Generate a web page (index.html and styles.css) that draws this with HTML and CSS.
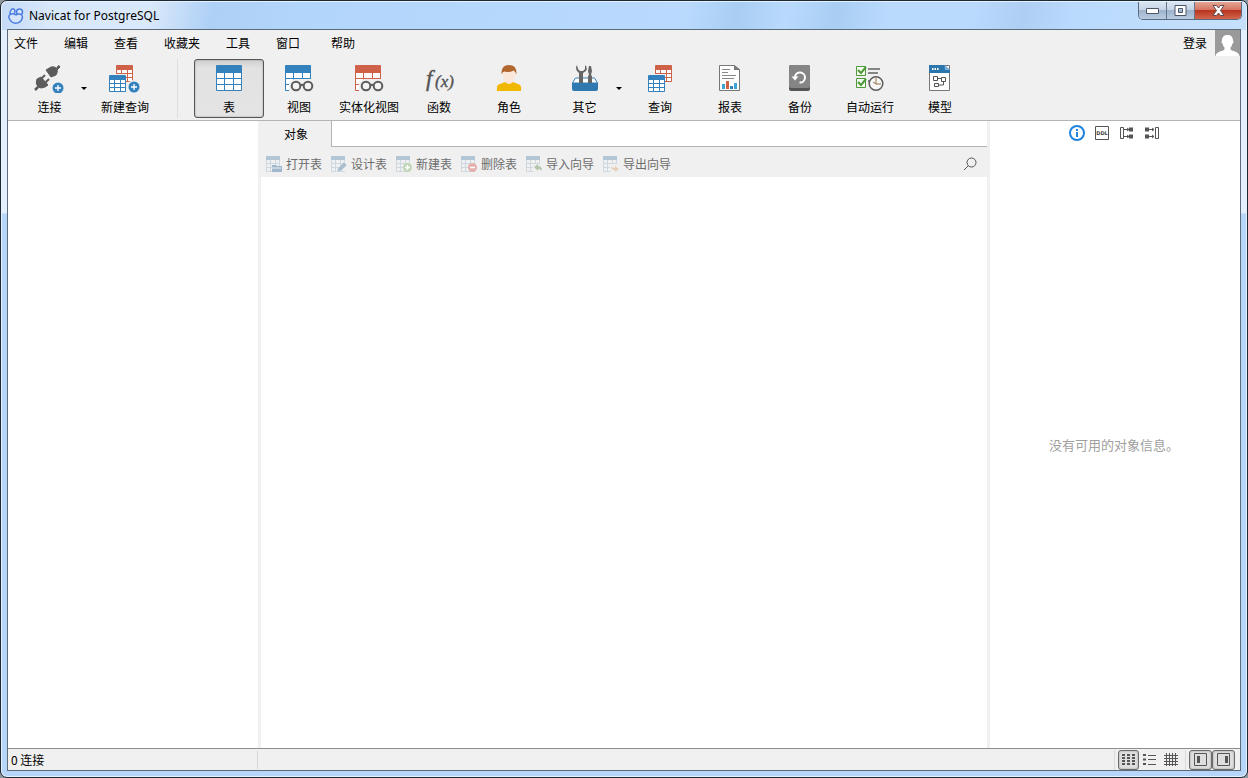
FILE: index.html
```html
<!DOCTYPE html>
<html lang="zh-CN">
<head>
    <meta charset="UTF-8">
    <meta name="viewport" content="width=device-width, initial-scale=1.0">
    <title>Navicat for PostgreSQL</title>
    <link rel="stylesheet" href="styles.css">
</head>
<body>
    <!-- shared icon parts -->
    <svg class="defs" width="0" height="0" aria-hidden="true">
        <symbol id="grid-big" viewBox="0 0 26 26">
            <path fill="currentColor" d="M0 1q0-1 1-1h24q1 0 1 1v24q0 1-1 1H1q-1 0-1-1z"/>
            <path fill="#fff" d="M1 8h7v5H1zM9 8h8v5H9zM18 8h7v5h-7zM1 14h7v5H1zM9 14h8v5H9zM18 14h7v5h-7zM1 20h7v5H1zM9 20h8v5H9zM18 20h7v5h-7z"/>
        </symbol>
        <symbol id="grid-small" viewBox="0 0 17 17">
            <path fill="currentColor" d="M0 1q0-1 1-1h15q1 0 1 1v15q0 1-1 1H1q-1 0-1-1z"/>
            <path fill="#fff" d="M1 5h4v3H1zM6 5h5v3H6zM12 5h4v3h-4zM1 9h4v3H1zM6 9h5v3H6zM12 9h4v3h-4zM1 13h4v3H1zM6 13h5v3H6zM12 13h4v3h-4z"/>
        </symbol>
        <symbol id="glasses" viewBox="0 0 30 27">
            <path fill="#efefef" d="M5 27V19q2-5 7-5h16v13z"/>
            <g fill="#f4f4f4" stroke="#5b5b5b" stroke-width="2">
                <circle cx="12" cy="21" r="4.300"/>
                <circle cx="24" cy="21" r="4.300"/>
                <path d="M16 20.500q2-1.500 4 0" fill="none"/>
            </g>
        </symbol>
        <symbol id="plus" viewBox="0 0 12 12">
            <circle cx="6" cy="6" r="5.500" fill="#3482bd"/>
            <path d="M6 3v6M3 6h6" stroke="#fff" stroke-width="1.300"/>
        </symbol>
        <symbol id="mini-table" viewBox="0 0 16 16">
            <path fill="#b3c6d6" d="M0 0h14v4H0z"/>
            <path d="M.5 4v11.500H14M.5 7.500H14M.5 11.500H14M4.500 4v11M9.500 4v11M13.500 4v7" fill="none" stroke="#cdd8e1"/>
        </symbol>
    </svg>

    <div class="window">
        <header class="titlebar">
            <svg class="app-icon" width="16" height="16" viewBox="0 0 16 16" fill="#d5e4fb" stroke="#4c7ee0" stroke-width="1.500">
                <ellipse cx="4.500" cy="4" rx="2.200" ry="3.200" transform="rotate(20 4.500 4)"/>
                <ellipse cx="11.500" cy="4" rx="3" ry="3"/>
                <path d="M2 6.500Q0 8 1.500 11q2 4 6 4.200 5-.2 6.500-4.200 1.200-3-1-4.500-3-1-5 .5-3-2-6-.5z"/>
            </svg>
            <h1 class="title">Navicat for PostgreSQL</h1>
            <div class="window-controls">
                <button type="button" class="control" aria-label="最小化">
                    <svg width="13" height="6" viewBox="0 0 13 6"><path d="M.5.5h12v5H.5z" fill="#fff" stroke="#4d5569"/></svg>
                </button>
                <button type="button" class="control" aria-label="最大化">
                    <svg width="13" height="11" viewBox="0 0 13 11"><path d="M1 .5h11v10H1zM4.500 3.500v4h4v-4z" fill="#fff" fill-rule="evenodd" stroke="#4d5569"/></svg>
                </button>
                <button type="button" class="control control-close" aria-label="关闭">
                    <svg width="13" height="11" viewBox="0 0 13 11"><path d="M1 .5h3.500l2 2.500 2-2.500H12L8.500 5.500l3.500 5H8.500l-2-2.500-2 2.500H1l3.500-5z" fill="#fff" stroke="#5d4a52"/></svg>
                </button>
            </div>
        </header>

        <div class="client">
            <div class="menubar">
                <nav class="menus">
                    <button type="button" class="menu">文件</button>
                    <button type="button" class="menu">编辑</button>
                    <button type="button" class="menu">查看</button>
                    <button type="button" class="menu">收藏夹</button>
                    <button type="button" class="menu">工具</button>
                    <button type="button" class="menu">窗口</button>
                </nav>
                <nav class="menus">
                    <button type="button" class="menu">帮助</button>
                </nav>
                <button type="button" class="login">
                    <span>登录</span>
                    <svg class="avatar" width="25" height="26" viewBox="0 0 25 26">
                        <path fill="#9a9a9a" d="M0 0h25v26H0z"/>
                        <path fill="#fff" d="M12.500 5c3.500 0 5.500 2 5.500 5.500 1 1 .5 2.500-.5 3-.5 2-1 3-2 4v2c2 2 8 1.500 9 6.500H0.500c1-5 7-4.500 9-6.500v-2c-1-1-1.500-2-2-4-1-.5-1.500-2-.5-3C7 7 9 5 12.500 5z"/>
                    </svg>
                </button>
            </div>

            <div class="toolbar">
                <div class="split">
                    <button type="button" class="tool">
                        <svg width="32" height="28" viewBox="0 0 32 28">
                            <g fill="#5b5b5b" stroke="#5b5b5b">
                                <path d="M23 2l2-1.500 1 1.500-3 3z"/>
                                <path d="M12 5l5-3q4-1 6 2 1 3-1 6l-5 2z"/>
                                <path d="M3 14l4-2 7 8-3 2q-4 2-7 0-3-4-1-8z"/>
                                <path d="M7 14l4-4M11 18l4-4" fill="none" stroke-width="2"/>
                                <path d="M4 22l-3 3" fill="none" stroke-width="2.500"/>
                            </g>
                            <use href="#plus" x="18" y="17" width="12" height="12"/>
                        </svg>
                        <span>连接</span>
                    </button>
                    <button type="button" class="split-arrow" aria-label="连接选项"></button>
                </div>
                <button type="button" class="tool">
                    <svg width="32" height="28" viewBox="0 0 32 28">
                        <use href="#grid-small" class="red" x="7" y="0" width="17" height="17"/>
                        <path fill="#efefef" d="M0 9h17v19H0z"/>
                        <use href="#grid-small" class="blue" x="0" y="10" width="17" height="17"/>
                        <circle cx="25" cy="22" r="7" fill="#efefef"/>
                        <use href="#plus" x="19" y="16" width="12" height="12"/>
                    </svg>
                    <span>新建查询</span>
                </button>
                <span class="tool-separator"></span>
                <button type="button" class="tool tool-active">
                    <svg width="26" height="28" viewBox="0 0 26 28"><use href="#grid-big" class="blue" width="26" height="26"/></svg>
                    <span>表</span>
                </button>
                <button type="button" class="tool">
                    <svg width="30" height="28" viewBox="0 0 30 28">
                        <use href="#grid-big" class="blue" x="1" width="26" height="26"/>
                        <use href="#glasses" width="30" height="27"/>
                    </svg>
                    <span>视图</span>
                </button>
                <button type="button" class="tool">
                    <svg width="30" height="28" viewBox="0 0 30 28">
                        <use href="#grid-big" class="red" x="1" width="26" height="26"/>
                        <use href="#glasses" width="30" height="27"/>
                    </svg>
                    <span>实体化视图</span>
                </button>
                <button type="button" class="tool">
                    <svg width="34" height="28" viewBox="0 0 34 28" class="fx">
                        <text x="4" y="21" font-size="23">f</text>
                        <text x="13" y="22" font-size="17">(x)</text>
                    </svg>
                    <span>函数</span>
                </button>
                <button type="button" class="tool">
                    <svg width="26" height="28" viewBox="0 0 26 28">
                        <path fill="#f0b800" d="M1 26q-1-6 3-7l5-2h8l5 2q4 1 3 7z"/>
                        <path fill="#fbe6da" d="M9 13h8v4q-4 4-8 0z"/>
                        <ellipse cx="13" cy="9" rx="6.500" ry="7.500" fill="#fbe6da"/>
                        <path fill="#b2672f" d="M5.500 9.500Q5 0 13 0t7.500 9.500q-1-3-3-4-4 2.500-9 1-2 0-3 3z"/>
                    </svg>
                    <span>角色</span>
                </button>
                <div class="split">
                    <button type="button" class="tool">
                        <svg width="28" height="28" viewBox="0 0 28 28">
                            <path d="M1.500 18l3-5h19l3 5z" fill="#fff" stroke="#3482bd"/>
                            <path fill="#666" d="M6 0q-2 3 0 6l2 2v10h4V8l3-2q2-3-1-6v4l-2 2H9L7 4z"/>
                            <path fill="#666" d="M18 1h2l1 5-1 4 1 1v7h-4v-7l1-1-1-4z"/>
                            <path fill="#2f78b0" d="M1 18h26v6q0 2-2 2H3q-2 0-2-2z"/>
                        </svg>
                        <span>其它</span>
                    </button>
                    <button type="button" class="split-arrow" aria-label="其它选项"></button>
                </div>
                <button type="button" class="tool">
                    <svg width="24" height="28" viewBox="0 0 24 28">
                        <use href="#grid-small" class="red" x="7" y="0" width="17" height="17"/>
                        <path fill="#efefef" d="M0 9h17v19H0z"/>
                        <use href="#grid-small" class="blue" x="0" y="10" width="17" height="17"/>
                    </svg>
                    <span>查询</span>
                </button>
                <button type="button" class="tool">
                    <svg width="22" height="28" viewBox="0 0 22 28">
                        <path d="M.5.500h15l5 4v21H.5z" fill="#fff" stroke="#777"/>
                        <path d="M15 0l6 5h-6z" fill="#777"/>
                        <path d="M3 4.500h8M3 7.500h6M3 10.500h14M3 13.500h12" stroke="#888"/>
                        <path fill="#3fa3d8" d="M3 19h3v5H3zM15 18h3v6h-3z"/>
                        <path fill="#cf6148" d="M7 16h3v8H7z"/>
                        <path fill="#3482bd" d="M11 21h3v3h-3z"/>
                    </svg>
                    <span>报表</span>
                </button>
                <button type="button" class="tool">
                    <svg width="22" height="28" viewBox="0 0 22 28">
                        <rect width="21" height="26" rx="2" fill="#555"/>
                        <path d="M0 2q0-2 2-2h17q2 0 2 2v19q0 2-2 2H2q-2 0-2-2z" fill="#858585"/>
                        <path d="M6 12a5 5 0 1 1 4.500 5.500" fill="none" stroke="#fff" stroke-width="2"/>
                        <path d="M2.500 11.500h7L6 15.500z" fill="#fff"/>
                    </svg>
                    <span>备份</span>
                </button>
                <button type="button" class="tool">
                    <svg width="30" height="28" viewBox="0 0 30 28">
                        <path d="M1.500 1.500h9v9h-9zM1.500 13.500h9v9h-9z" fill="#f5fbf1" stroke="#4f9a38"/>
                        <path d="M3 5l3 3 5-6M3 17l3 3 5-6" fill="none" stroke="#4f9a38" stroke-width="2"/>
                        <path d="M13 4h12M13 8h10M13 16h4" stroke="#858585" stroke-width="2"/>
                        <circle cx="21" cy="18.500" r="6.800" fill="#f7f7f7" stroke="#5b5b5b" stroke-width="1.500"/>
                        <path d="M21 13v6h5M21 19l-3-2" fill="none" stroke="#957248"/>
                    </svg>
                    <span>自动运行</span>
                </button>
                <button type="button" class="tool">
                    <svg width="22" height="28" viewBox="0 0 22 28">
                        <path d="M.5.500h20v25H.5z" fill="#fff" stroke="#777"/>
                        <path fill="#2b76ac" d="M0 0h15.500L21 5v3H0z"/>
                        <path fill="#79b2db" d="M15.500 0L21 5h-5z"/>
                        <path fill="#fff" d="M3 3h1.500v2H3zM5.500 3H7v2H5.500zM8 3h1.500v2H8z"/>
                        <path d="M4.500 11.500h4v4h-4zM12.500 12.500h4v4h-4zM5.500 18.500h4v3h-4zM8.500 13.500h4M14.500 16.500v3.500h-5" fill="none" stroke="#555"/>
                    </svg>
                    <span>模型</span>
                </button>
            </div>

            <main class="workspace">
                <aside class="pane-left"></aside>
                <section class="pane-center">
                    <div class="tabs" role="tablist">
                        <button type="button" class="tab" role="tab" aria-selected="true">对象</button>
                        <span class="tab-rest"></span>
                    </div>
                    <div class="actions">
                        <button type="button" class="action" disabled>
                            <svg width="16" height="16" viewBox="0 0 16 16"><use href="#mini-table" width="16" height="16"/><path d="M6 9h4l1 1h5v6H6z" fill="#9fb8cd"/><path d="M6 12h9" stroke="#efefef"/></svg>
                            打开表
                        </button>
                        <button type="button" class="action" disabled>
                            <svg width="16" height="16" viewBox="0 0 16 16"><use href="#mini-table" width="16" height="16"/><path d="M6 16l1-4 6-6 3 3-6 6z" fill="#a9bfd0" stroke="#efefef" stroke-width=".5"/></svg>
                            设计表
                        </button>
                        <button type="button" class="action" disabled>
                            <svg width="16" height="16" viewBox="0 0 16 16"><use href="#mini-table" width="16" height="16"/><circle cx="11.500" cy="11.500" r="4.500" fill="#bfd6b7"/><path d="M11.500 9v5M9 11.500h5" stroke="#fff" stroke-width="1.500"/></svg>
                            新建表
                        </button>
                        <button type="button" class="action" disabled>
                            <svg width="16" height="16" viewBox="0 0 16 16"><use href="#mini-table" width="16" height="16"/><circle cx="11.500" cy="11.500" r="4.500" fill="#e5b0ac"/><path d="M9 11.500h5" stroke="#fff" stroke-width="1.500"/></svg>
                            删除表
                        </button>
                        <button type="button" class="action" disabled>
                            <svg width="16" height="16" viewBox="0 0 16 16"><use href="#mini-table" width="16" height="16"/><path d="M7 8h9v8H7z" fill="#efefef"/><path d="M8 11l4-3v2q4 0 4 5-1-2-4-2v2z" fill="#b5c6af"/></svg>
                            导入向导
                        </button>
                        <button type="button" class="action" disabled>
                            <svg width="16" height="16" viewBox="0 0 16 16"><use href="#mini-table" width="16" height="16"/><path d="M7 8h9v8H7z" fill="#efefef"/><path d="M8 9q0 3 4 3v-2l4 3-4 3v-2q-4 0-4-5z" fill="#e6cfb8"/></svg>
                            导出向导
                        </button>
                        <button type="button" class="search" aria-label="搜索">
                            <svg width="14" height="14" viewBox="0 0 14 14" fill="none" stroke="#555"><circle cx="8.500" cy="5.500" r="4.500"/><path d="M5.500 8.500L1 13"/></svg>
                        </button>
                    </div>
                    <div class="object-list"></div>
                </section>
                <aside class="pane-right">
                    <div class="info-tabs">
                        <button type="button" class="info-tab" aria-label="常规">
                            <svg width="16" height="16" viewBox="0 0 16 16"><circle cx="8" cy="8" r="7" fill="#fff" stroke="#1f83e0" stroke-width="2"/><path d="M8 4v2M8 7v5" stroke="#1f83e0" stroke-width="2"/></svg>
                        </button>
                        <button type="button" class="info-tab" aria-label="DDL">
                            <svg width="16" height="16" viewBox="0 0 16 16"><path d="M1.500 1.500h13v13h-13z" fill="#fff" stroke="#555"/><text x="8" y="10" class="ddl">DDL</text></svg>
                        </button>
                        <button type="button" class="info-tab" aria-label="使用">
                            <svg width="16" height="16" viewBox="0 0 16 16"><path d="M1.500 2.500h3v11h-3zM5 4.500h5M5 11.500h5M8 3l2 1.500L8 6M8 10l2 1.500L8 13" fill="none" stroke="#555"/><path d="M10 2.500h4v4h-4zM10 9.500h4v4h-4z" fill="#555"/></svg>
                        </button>
                        <button type="button" class="info-tab" aria-label="使用者">
                            <svg width="16" height="16" viewBox="0 0 16 16"><path d="M11.500 2.500h3v11h-3zM5 4.500h5M5 11.500h5M8 3l2 1.500L8 6M8 10l2 1.500L8 13" fill="none" stroke="#555"/><path d="M1 2.500h4v4H1zM1 9.500h4v4H1z" fill="#555"/></svg>
                        </button>
                    </div>
                    <p class="empty-info">没有可用的对象信息。</p>
                </aside>
            </main>

            <footer class="statusbar">
                <span class="status-text">0 连接</span>
                <div class="view-group">
                    <button type="button" class="view view-on" aria-label="列表">
                        <svg width="15" height="13" viewBox="0 0 15 13"><path d="M1 2h3M6 2h3M11 2h3M1 5h3M6 5h3M11 5h3M1 8h3M6 8h3M11 8h3M1 11h3M6 11h3M11 11h3" stroke="#555" stroke-width="2"/></svg>
                    </button>
                    <button type="button" class="view" aria-label="详细信息">
                        <svg width="15" height="13" viewBox="0 0 15 13"><path d="M1 2h3M1 6.500h3M1 11h3" stroke="#555" stroke-width="2"/><path d="M6 2.500h8M6 6.500h8M6 11.500h8" stroke="#555"/></svg>
                    </button>
                    <button type="button" class="view" aria-label="ER 图表">
                        <svg width="15" height="15" viewBox="0 0 15 15"><path d="M3.500 1v13M6.500 1v13M9.500 1v13M12.500 1v13M1 3.500h14M1 6.500h14M1 9.500h14M1 12.500h14" stroke="#555"/></svg>
                    </button>
                </div>
                <div class="view-group">
                    <button type="button" class="view view-on view-wide" aria-label="导航窗格">
                        <svg width="13" height="13" viewBox="0 0 13 13"><path d="M.5.5h12v12H.5z" fill="none" stroke="#555"/><path d="M3 3h3v7H3z" fill="#555"/></svg>
                    </button>
                    <button type="button" class="view view-on view-wide" aria-label="信息窗格">
                        <svg width="13" height="13" viewBox="0 0 13 13"><path d="M.5.5h12v12H.5z" fill="none" stroke="#555"/><path d="M8 3h3v7H8z" fill="#555"/></svg>
                    </button>
                </div>
            </footer>
        </div>
    </div>
</body>
</html>
```

FILE: styles.css
```css
:root {
    --face: #f0f0f0;
    --line: #b4b4b4;
    --blue: #3482bd;
    --red: #cf6148;
    --frame: #b7d5f8;
}
* {
    box-sizing: border-box;
}
body {
    margin: 0;
    background: #8d979f;
    font-family: "Noto Sans CJK SC", sans-serif;
    font-size: 12px;
    line-height: 16px;
    color: #000;
}
button {
    margin: 0;
    padding: 0;
    border: none;
    background: none;
    font: inherit;
    color: inherit;
}
svg {
    display: block;
    flex: none;
}
.defs {
    position: absolute;
}
.blue {
    color: var(--blue);
}
.red {
    color: var(--red);
}

/* window frame */
.window {
    display: flex;
    flex-direction: column;
    height: 100vh;
    padding: 0 6px 6px;
    border: 1px solid #1d2835;
    border-radius: 7px;
    box-shadow: inset 0 0 0 1px #e6f2fe;
    background: linear-gradient(#e3effc 212px, var(--frame) 213px);
}
.titlebar {
    display: flex;
    align-items: center;
    height: 28px;
    margin: 1px -5px -1px;
    padding: 0 4px 0 6px;
    border-radius: 6px 6px 0 0;
    background: linear-gradient(100deg, #c3daf6 0, #d9e8fa 4%, #d9e8fa 12%, #aed0f6 17%, #b2d5fb 24%, #b9dafd 55%, #a9cdf3 59%, #b9dafd 63%, #a9cdf3 67%, #b9dafd 71%, #b9dafd 78%, #aecff3 82%, #b9dafd 86%, #c6e0fb 100%);
}
.app-icon {
    margin-right: 5px;
}
.title {
    margin: 0;
    font: 12px/16px "Noto Sans", sans-serif;
}
.window-controls {
    display: flex;
    align-self: flex-start;
    margin-left: auto;
    border: 1px solid #5a6b80;
    border-top: none;
    border-radius: 0 0 5px 5px;
    overflow: hidden;
}
.control {
    display: flex;
    align-items: center;
    justify-content: center;
    width: 28px;
    height: 17px;
    border-right: 1px solid #65758b;
    background: linear-gradient(#dbe6f3 0, #c3d2e4 50%, #9eb3cc 50%, #b8cbe0 100%);
}
.control-close {
    width: 46px;
    border-right: none;
    background: linear-gradient(#e5a594 0, #d2705c 50%, #b93520 50%, #d2664d 100%);
}
.client {
    display: flex;
    flex: 1;
    flex-direction: column;
    min-height: 0;
    border: 1px solid #5b6b7c;
    background: #fff;
}

/* menu */
.menubar {
    display: flex;
    align-items: center;
    gap: 31px;
    height: 26px;
    padding-left: 6px;
    background: var(--face);
}
.menus {
    display: flex;
    gap: 26px;
}
.login {
    display: flex;
    align-items: center;
    gap: 8px;
    margin-left: auto;
}

/* main toolbar */
.toolbar {
    display: flex;
    padding: 3px 0 2px 1px;
    border-bottom: 1px solid var(--line);
    background: var(--face);
}
.tool {
    display: flex;
    flex-direction: column;
    align-items: center;
    gap: 6px;
    width: 70px;
    height: 59px;
    padding-top: 5px;
    border: 1px solid transparent;
    border-radius: 3px;
    white-space: nowrap;
}
.tool-active {
    border-color: #555;
    background: linear-gradient(#cfcfcf, #e2e2e2 8px, #e4e4e4);
    box-shadow: inset 0 0 2px #999;
}
.tool-separator {
    width: 1px;
    margin: 0 16px 0 17px;
    background: #dedede;
}
.split {
    position: relative;
    display: flex;
    justify-content: center;
    width: 81px;
}
.split-arrow {
    position: absolute;
    right: 3px;
    bottom: 0;
    width: 6px;
    height: 59px;
}
.split-arrow::before {
    content: "";
    display: block;
    border: 3px solid transparent;
    border-top-color: #000;
    border-bottom: none;
}
.fx {
    overflow: visible;
    font-family: "Liberation Serif", serif;
    font-style: italic;
    line-height: 1;
    fill: #555;
    stroke: #555;
    stroke-width: .4;
}

/* panes */
.workspace {
    display: flex;
    flex: 1;
    min-height: 0;
}
.pane-left {
    width: 250px;
}
.pane-center {
    display: flex;
    flex: 1;
    flex-direction: column;
    min-width: 0;
    border: solid var(--face);
    border-width: 0 3px;
}
.tabs {
    display: flex;
    height: 26px;
}
.tab {
    width: 70px;
    background: var(--face);
}
.tab-rest {
    flex: 1;
    border: solid var(--line);
    border-width: 0 0 1px 1px;
}
.actions {
    display: flex;
    align-items: center;
    gap: 9px;
    height: 30px;
    padding: 4px 10px 0 5px;
    background: var(--face);
}
.action {
    display: flex;
    align-items: center;
    gap: 4px;
    color: #6d6d6d;
    white-space: nowrap;
}
.search {
    margin-left: auto;
}
.pane-right {
    display: flex;
    flex-direction: column;
    width: 250px;
    padding-right: 2px;
}
.info-tabs {
    display: flex;
    justify-content: center;
    gap: 9px;
    padding-top: 4px;
}
.ddl {
    font: bold 5px "DejaVu Sans", sans-serif;
    text-anchor: middle;
    fill: #444;
}
.empty-info {
    margin: auto 0;
    font-size: 13px;
    text-align: center;
    color: #a0a0a0;
}

/* status bar */
.statusbar {
    display: flex;
    align-items: center;
    height: 22px;
    padding-right: 5px;
    border-top: 1px solid #8e8e8e;
    background: var(--face);
}
.status-text {
    width: 250px;
    height: 18px;
    padding-left: 3px;
    line-height: 18px;
    border-right: 1px solid #d5d5d5;
    margin-right: auto;
}
.view-group {
    display: flex;
    padding-left: 3px;
    border-left: 1px solid #dcdcdc;
}
.view-group + .view-group {
    margin-left: 4px;
}
.view {
    display: flex;
    align-items: center;
    justify-content: center;
    width: 21px;
    height: 20px;
    border: 1px solid transparent;
    border-radius: 3px;
}
.view-on {
    border-color: #6b6b6b;
    background: #dedede;
    box-shadow: inset 0 0 2px #999;
}
.view-wide {
    width: 23px;
}
```
